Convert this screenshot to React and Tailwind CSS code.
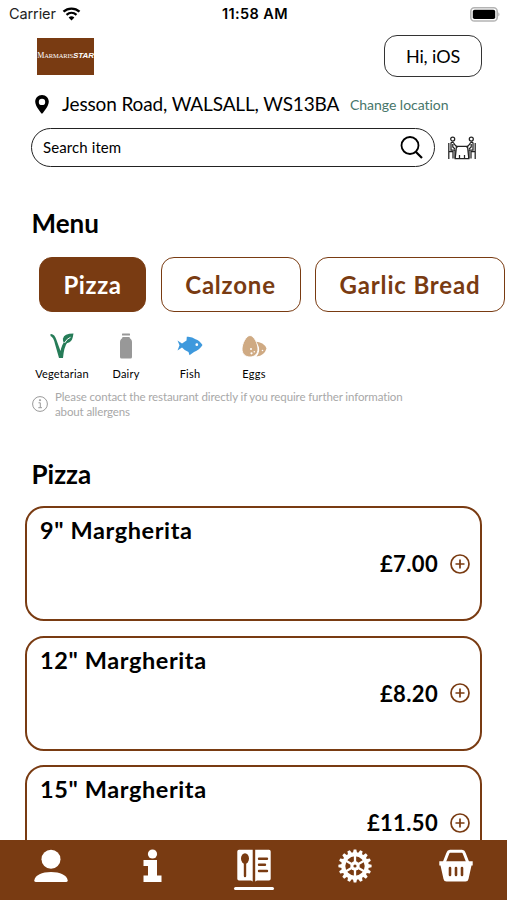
import React from "react";

const categories = [
  { name: "Pizza", box: "w-[107px]", text: "text-[24px] tracking-[0.6px]", active: true },
  { name: "Calzone", box: "w-[140px]", text: "text-[24px] tracking-[0.8px]" },
  { name: "Garlic Bread", box: "w-[190px]", text: "text-[24px] tracking-[0.85px]" },
];

const items = [
  { name: '9" Margherita', price: "£7.00" },
  { name: '12" Margherita', price: "£8.20" },
  { name: '15" Margherita', price: "£11.50" },
];

function Wifi() {
  return (
    <svg viewBox="0 0 18 14" className="h-[14px] w-[19px]" fill="none" stroke="#000">
      <path d="M1 4.7C5.5 .6 12.5 .6 17 4.7" strokeWidth="2.4" />
      <path d="M4 7.8C7 5.2 11 5.2 14 7.8" strokeWidth="2.2" />
      <path d="M9 13.5 6.1 10.5Q9 8.2 11.9 10.5Z" fill="#000" stroke="none" />
    </svg>
  );
}

function Battery() {
  return (
    <svg viewBox="0 0 31 15" className="h-[15px] w-[31px]">
      <rect x=".8" y=".8" width="26.4" height="13.2" rx="3.6" fill="#fff" stroke="#b4b4b4" strokeWidth="1.6" />
      <rect x="2.8" y="2.7" width="22.4" height="9.4" rx="1.8" />
      <path d="M28.4 5.2Q30.5 7.4 28.4 9.6Z" fill="#aaa" />
    </svg>
  );
}

function Pin() {
  return (
    <svg viewBox="0 0 14 19" className="h-[19px] w-[14px]">
      <path fillRule="evenodd" d="M7 0C3 0 .2 3 .2 6.8.2 11.5 7 19 7 19s6.800-7.500 6.800-12.200C13.800 3 11 0 7 0Zm0 3.700a3.200 3.200 0 1 1 0 6.400 3.200 3.200 0 0 1 0-6.400Z" />
    </svg>
  );
}

function Diners() {
  return (
    <svg viewBox="0 0 28 24" className="h-[24px] w-[28px]" fill="none" stroke="#222" strokeWidth="1.25">
      <circle cx="4.700" cy="3" r="2" />
      <circle cx="23.300" cy="3" r="2" />
      <path d="M3 6.500Q5.500 5.500 6.500 8.500L9.500 11.500M3 6.500V14H7V22.500M.8 7V23M.8 15.500H5V22.500M4.800 8V11L7 13" />
      <path d="M25 6.500Q22.500 5.500 21.500 8.500L18.500 11.500M25 6.500V14H21V22.500M27.200 7V23M27.200 15.500H23V22.500M23.200 8V11L21 13" />
      <path d="M8.500 10.300H19.500L20.800 22.500H7.200ZM11.500 22.500V19M16.500 22.500V19" />
    </svg>
  );
}

function Leaf() {
  return (
    <svg viewBox="0 0 24 26" className="h-[26px] w-[24px]" fill="none">
      <path d="M.5 1Q4.500 .5 6.500 7L10.500 18Q12 11 15 8L17 10Q14 14 13 25H9L5 11Q3.500 4 .5 3Z" fill="#267c58" />
      <path d="M23.500 .5Q14 .5 13 5.500 12.500 9 15 10.500 20.500 10 22 6.500 23 4 23.500 .5Z" fill="#267c58" />
      <path d="M14.500 10Q17 5.500 20.500 4.300" stroke="#fff" />
    </svg>
  );
}

function Bottle() {
  return (
    <svg viewBox="0 0 12 26" className="h-[26px] w-[12px]" fill="#989898">
      <rect x="2" y=".5" width="8" height="2" rx=".5" />
      <path d="M2.500 4H9.500Q9.500 5.200 11 6.300 12 7.300 12 9V24Q12 25.500 10.500 25.500H1.500Q0 25.500 0 24V9Q0 7.300 1 6.300 2.500 5.200 2.500 4Z" />
    </svg>
  );
}

function Fish() {
  return (
    <svg viewBox="0 0 26 20" className="h-[20px] w-[26px]">
      <path d="M.5 4.500 5 7.500 9.500 4.500 9.800 .8Q15 .3 18.500 3.300 22.500 4.500 25.500 9 22.500 14 17 16L12.500 19.300 11.500 16Q8 15 5 11.500L.5 14.500 2.500 9.300Z" fill="#3e99dd" />
      <circle cx="19.800" cy="8.700" r="1.350" fill="#fff" />
    </svg>
  );
}

function Eggs() {
  return (
    <svg viewBox="0 0 25 23" className="h-[23px] w-[25px]" fill="#cfaa83">
      <path d="M13 6.500Q22 7 24.500 13.500 22.500 20.500 14.500 21.500Q19 16 16 10Z" />
      <path d="M8 .5C4 .5 0 9 0 14 0 19 3.500 22 8 22s8-3 8-8C16 9 12 .5 8 .5Z" stroke="#fff" strokeWidth=".9" />
      <g fill="#fff"><circle cx="9" cy="14" r="1" /><circle cx="9.500" cy="18.300" r="1.100" /><circle cx="12.300" cy="16.700" r=".8" /><circle cx="20.500" cy="15.500" r=".8" /></g>
    </svg>
  );
}

const allergens = [
  { name: "Vegetarian", Icon: Leaf },
  { name: "Dairy", Icon: Bottle },
  { name: "Fish", Icon: Fish },
  { name: "Eggs", Icon: Eggs },
];

function User() {
  return (
    <svg viewBox="0 0 34 34" className="h-[34px] w-[34px]" fill="#fff">
      <circle cx="17" cy="10.300" r="9.500" />
      <path d="M.3 31.500C1 26 8 23 17 23s16 3 16.700 8.500Q33.700 33 32 33H2Q.3 33 .3 31.500Z" />
    </svg>
  );
}

function Info() {
  return (
    <svg viewBox="0 0 20 34" className="h-[34px] w-[20px]" fill="#fff">
      <circle cx="10.500" cy="5" r="4.600" />
      <path d="M1.500 11H15V26.500H19.500V33H1.500V26.500H6V17H1.500Z" />
    </svg>
  );
}

function MenuBook() {
  return (
    <svg viewBox="0 0 34 34" className="h-[34px] w-[34px]">
      <path d="M2 .8H15.700V32.500L14 31.500H2Q.3 31.500.3 29.800V2.500Q.3.8 2 .8ZM18.200.8H32Q33.700.8 33.700 2.500V29.800Q33.700 31.500 32 31.500H20L18.200 32.500Z" fill="#fff" />
      <ellipse cx="8" cy="9.500" rx="4" ry="5.200" fill="#793b12" />
      <path d="M8 13V27M22 9.700H30M22 15.700H28M22 22H30" stroke="#793b12" strokeWidth="2.400" strokeLinecap="round" />
    </svg>
  );
}

function Gear() {
  const angles = Array.from({ length: 16 }, (_, i) => i * 22.5);
  return (
    <svg viewBox="-17 -17 34 34" className="h-[34px] w-[34px]">
      <circle r="11.700" fill="none" stroke="#fff" strokeWidth="4" />
      {angles.map((a) => <path key={a} d="M-2.300-12-1.300-16.600H1.300L2.300-12Z" fill="#fff" transform={`rotate(${a})`} />)}
      {[0, 60, 120, 180, 240, 300].map((a) => <path key={a} d="M0-4V-11" stroke="#fff" strokeWidth="2.300" transform={`rotate(${a})`} />)}
      <circle r="4.700" fill="#fff" /><circle r="1.600" fill="#793b12" />
    </svg>
  );
}

function Basket() {
  return (
    <svg viewBox="0 0 34 34" className="h-[34px] w-[34px]">
      <path d="M5 14 9 3.800Q9.500 2.300 11 2.300H23Q24.500 2.300 25 3.800L29 14" fill="none" stroke="#fff" strokeWidth="3" />
      <path d="M.3 12.300H33.700V16.500H32.500L29.500 30Q29 32.500 26.500 32.500H7.500Q5 32.500 4.500 30L1.500 16.500H.3Z" fill="#fff" />
      <path d="M11 19V26M17 19V26M23 19V26" stroke="#793b12" strokeWidth="2.600" strokeLinecap="round" />
    </svg>
  );
}

const tabs = [User, Info, MenuBook, Gear, Basket];

export default function App() {
  return (
    <div className="flex h-[900px] w-[507px] flex-col overflow-hidden whitespace-nowrap bg-white font-['Lato','Liberation_Sans',sans-serif] text-black">
      <div className="flex h-7 shrink-0 items-center justify-between pl-[9px] pr-[6px] font-['Inter',sans-serif]">
        <div className="flex w-[120px] items-center gap-[6px] text-[14.500px] tracking-[-0.1px] text-[#222]"><span>Carrier</span><Wifi /></div>
        <span className="text-[14.500px] font-semibold tracking-[0.4px]">11:58 AM</span>
        <div className="flex w-[120px] justify-end"><Battery /></div>
      </div>
      <header className="flex h-[50px] shrink-0 items-center justify-between pl-[37px] pr-[25px] pt-[6px]">
        <div className="flex h-[37px] w-[57px] items-center justify-center bg-[#793b12] text-[8px] leading-none text-white">
          <span className="font-['Liberation_Serif',serif] tracking-[-0.1px]">M<span className="text-[6.500px]">ARMARIS</span></span>
          <span className="font-['Liberation_Sans',sans-serif] font-bold italic tracking-[-0.1px]">STAR</span>
        </div>
        <button className="h-[42px] w-[98px] rounded-[13px] border-[1.500px] border-[#333] text-[18px] tracking-[-0.1px]">Hi, iOS</button>
      </header>
      <div className="flex h-[50px] shrink-0 items-center pl-[35px] pt-[3px]">
        <Pin />
        <span className="ml-[13px] w-[288px] text-[19px] tracking-[-0.14px]">Jesson Road, WALSALL, WS13BA</span>
        <span className="text-[14px] tracking-[-0.03px] text-[#47766a]">Change location</span>
      </div>
      <div className="flex h-[39px] shrink-0 items-center pl-[31px]">
        <div className="flex h-[39px] w-[404px] items-center justify-between rounded-full border border-[#222] pl-[11px] pr-[11px]">
          <span className="text-[15px] tracking-[0.1px]">Search item</span>
          <svg viewBox="0 0 23 23" className="h-[23px] w-[23px]" fill="none" stroke="#000" strokeWidth="1.800"><circle cx="10" cy="9.500" r="8.500" /><path d="m16 16 6 6" strokeWidth="2.200" /></svg>
        </div>
        <div className="ml-[13px]"><Diners /></div>
      </div>
      <h1 className="mt-[38px] h-[36px] shrink-0 pl-[31.500px] text-[26px] font-bold leading-[36px]">Menu</h1>
      <div className="mt-[16px] flex shrink-0 gap-[14.500px] pl-[39px]">
        {categories.map((c) => (
          <button key={c.name} className={`${c.box} ${c.text} h-[55px] shrink-0 rounded-[13px] border-[1.500px] border-[#793b12] font-bold ${c.active ? "bg-[#793b12] text-white" : "text-[#793b12]"}`}>{c.name}</button>
        ))}
      </div>
      <div className="flex h-[72px] shrink-0 pl-[30px] pt-[18px]">
        {allergens.map(({ name, Icon }) => (
          <div key={name} className="flex w-[64px] flex-col items-center">
            <div className="flex h-[32px] items-center"><Icon /></div>
            <span className="mt-[4px] text-[11px] leading-[16px] tracking-[0.22px]">{name}</span>
          </div>
        ))}
      </div>
      <div className="flex h-[40px] shrink-0 items-center gap-[7px] pl-[32px] text-[11.500px] leading-[15px] tracking-[-0.12px] text-[#a8a8a8]">
        <svg viewBox="0 0 16 16" className="h-[16px] w-[16px]" fill="none" stroke="#999"><circle cx="8" cy="8" r="7.400" /><path d="M6.500 6.800H8.300V11.500M6.300 11.700H10" /><circle cx="8" cy="4.200" r=".6" fill="#999" /></svg>
        <p>Please contact the restaurant directly if you require further information<br />about allergens</p>
      </div>
      <h2 className="mt-[32px] h-[36px] shrink-0 pl-[31.500px] text-[26px] font-bold leading-[36px]">Pizza</h2>
      <main className="mt-[14px] flex h-[334px] shrink-0 flex-col gap-[14.500px] overflow-hidden px-[25px]">
        {items.map((it) => (
          <article key={it.name} className="h-[115px] shrink-0 rounded-[19px] border-2 border-[#793b12] pl-[13px] pr-[10px] pt-[6px]">
            <h3 className="h-[33px] text-[23.500px] font-bold leading-[33px] tracking-[0.6px]">{it.name}</h3>
            <div className="flex h-[33px] items-center justify-end gap-[12px]">
              <span className="text-[22px] font-bold tracking-[0.35px]">{it.price}</span>
              <svg viewBox="0 0 20 20" className="h-[20px] w-[20px]" fill="none" stroke="#793b12" strokeWidth="1.700"><circle cx="10" cy="10" r="9" /><path d="M10 5.500V14.500M5.500 10H14.500" /></svg>
            </div>
          </article>
        ))}
      </main>
      <nav className="flex h-[60px] shrink-0 bg-[#793b12]">
        {tabs.map((Icon, i) => (
          <div key={i} className="flex flex-1 flex-col items-center gap-[4px] pt-[9px]">
            <Icon />
            {i === 2 && <div className="h-[3px] w-[40px] rounded-full bg-white" />}
          </div>
        ))}
      </nav>
    </div>
  );
}
